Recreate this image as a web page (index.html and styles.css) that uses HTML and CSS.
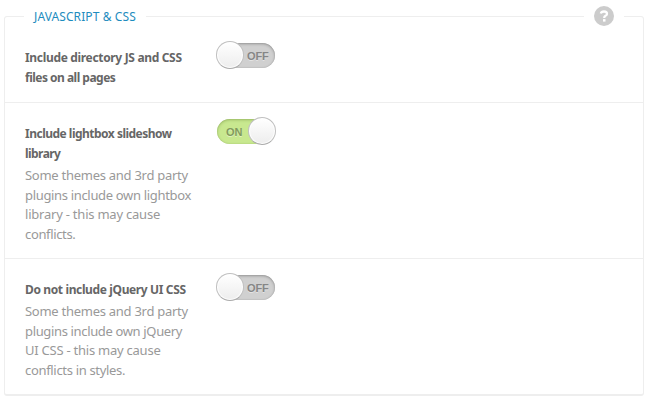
FILE: index.html
```html
<!DOCTYPE html>
<html lang="en">
<head>
<meta charset="utf-8">
<title>Settings</title>
<link rel="stylesheet" href="styles.css">
</head>
<body>
<section class="panel">
  <h2 class="legend">JAVASCRIPT &amp; CSS</h2>
  <span class="help"><svg width="20" height="20" viewBox="0 0 20 20"><circle cx="10" cy="10" r="10" fill="#ccc"/><path d="M6.8 7.6 Q7.3 5.5 10 5.5 Q13 5.5 13 7.9 Q13 9 11.5 9.8 Q10.2 10.5 10.2 12" fill="none" stroke="#fff" stroke-width="2.3"/><rect x="9" y="13.1" width="2.5" height="2.5" fill="#fff"/></svg></span>
  <div class="row first">
    <div class="text">
      <div class="title"><span class="t1">Include directory JS and CSS</span><br><span class="t2">files on all pages</span></div>
    </div>
    <div class="switch"><span class="label">OFF</span><span class="knob"></span></div>
  </div>
  <div class="row second">
    <div class="text">
      <div class="title"><span class="t3">Include lightbox slideshow</span><br><span class="t4">library</span></div>
      <div class="note"><span class="n1">Some themes and 3rd party</span><br><span class="n2">plugins include own lightbox</span><br><span class="n3">library - this may cause</span><br><span class="n4">conflicts.</span></div>
    </div>
    <div class="switch on"><span class="label">ON</span><span class="knob"></span></div>
  </div>
  <div class="row third">
    <div class="text">
      <div class="title"><span class="t5">Do not include jQuery UI CSS</span></div>
      <div class="note"><span class="n1">Some themes and 3rd party</span><br><span class="n5">plugins include own jQuery</span><br><span class="n6">UI CSS - this may cause</span><br><span class="n7">conflicts in styles.</span></div>
    </div>
    <div class="switch"><span class="label">OFF</span><span class="knob"></span></div>
  </div>
</section>
</body>
</html>
```
FILE: styles.css
```css
* { box-sizing: border-box; }
body {
  margin: 0;
  padding: 16px 3px 0 4px;
  background: #fff;
  font-family: "Noto Sans", "Open Sans", sans-serif;
  white-space: nowrap;
}
.panel {
  position: relative;
  width: 640px;
  height: 380px;
  border: 1px solid #eee;
  border-bottom-width: 2px;
  border-radius: 3px;
}
.legend {
  position: absolute;
  left: 19px;
  top: -10px;
  width: 122px;
  margin: 0;
  padding-left: 10px;
  background: #fff;
  color: #1e8cbe;
  font-size: 12px;
  font-weight: 400;
  line-height: 20px;
  letter-spacing: 0.1px;
}
.help {
  position: absolute;
  right: 19px;
  top: -11px;
  width: 40px;
  height: 20px;
  padding-left: 10px;
  background: #fff;
}
.help svg { display: block; }
.row {
  display: flex;
  align-items: flex-start;
  padding: 31px 20px 0;
}
.row + .row { border-top: 1px solid #eee; }
.first { height: 85px; }
.second { height: 156px; padding-top: 21px; }
.third { height: 136px; padding-top: 21px; }
.text { width: 192px; }
.title {
  color: #666;
  font-size: 12px;
  font-weight: 700;
  line-height: 20px;
}
.t1 { letter-spacing: -0.33px; }
.t2, .t3 { letter-spacing: -0.51px; }
.t4 { letter-spacing: -0.55px; }
.t5 { letter-spacing: -0.37px; }
.note {
  margin-top: 2px;
  color: #999;
  font-size: 13px;
  line-height: 19.6px;
}
.n1 { letter-spacing: -0.27px; }
.n2 { letter-spacing: -0.33px; }
.n3 { letter-spacing: -0.22px; }
.n4 { letter-spacing: -0.35px; }
.n5 { letter-spacing: -0.35px; }
.n6 { letter-spacing: -0.24px; }
.n7 { letter-spacing: -0.32px; }
.switch {
  position: relative;
  width: 58px;
  height: 25px;
  margin-top: -5px;
  border-radius: 13px;
  background: #d0d0d0;
  box-shadow: inset 0 1px 3px rgba(0,0,0,.28), inset 0 0 1px rgba(0,0,0,.2);
  color: #868686;
  font: 700 11px/26px "Liberation Sans", sans-serif;
  text-shadow: 0 1px 0 rgba(255,255,255,.45);
}
.label { display: block; padding-left: 30px; letter-spacing: -0.1px; }
.on {
  background: #c8e88f;
  color: #829b5d;
  box-shadow: inset 0 1px 3px rgba(70,100,20,.35), inset 0 0 1px rgba(70,100,20,.25);
}
.on .label { padding-left: 9px; }
.knob {
  position: absolute;
  left: -1px;
  top: -2px;
  width: 28px;
  height: 28px;
  border: 1px solid #c0c0c0;
  border-bottom-color: #aaa;
  border-radius: 50%;
  background: linear-gradient(#fff, #ededed);
  box-shadow: inset 0 0 1px 1px #fff;
}
.on .knob { left: 31px; }
```
